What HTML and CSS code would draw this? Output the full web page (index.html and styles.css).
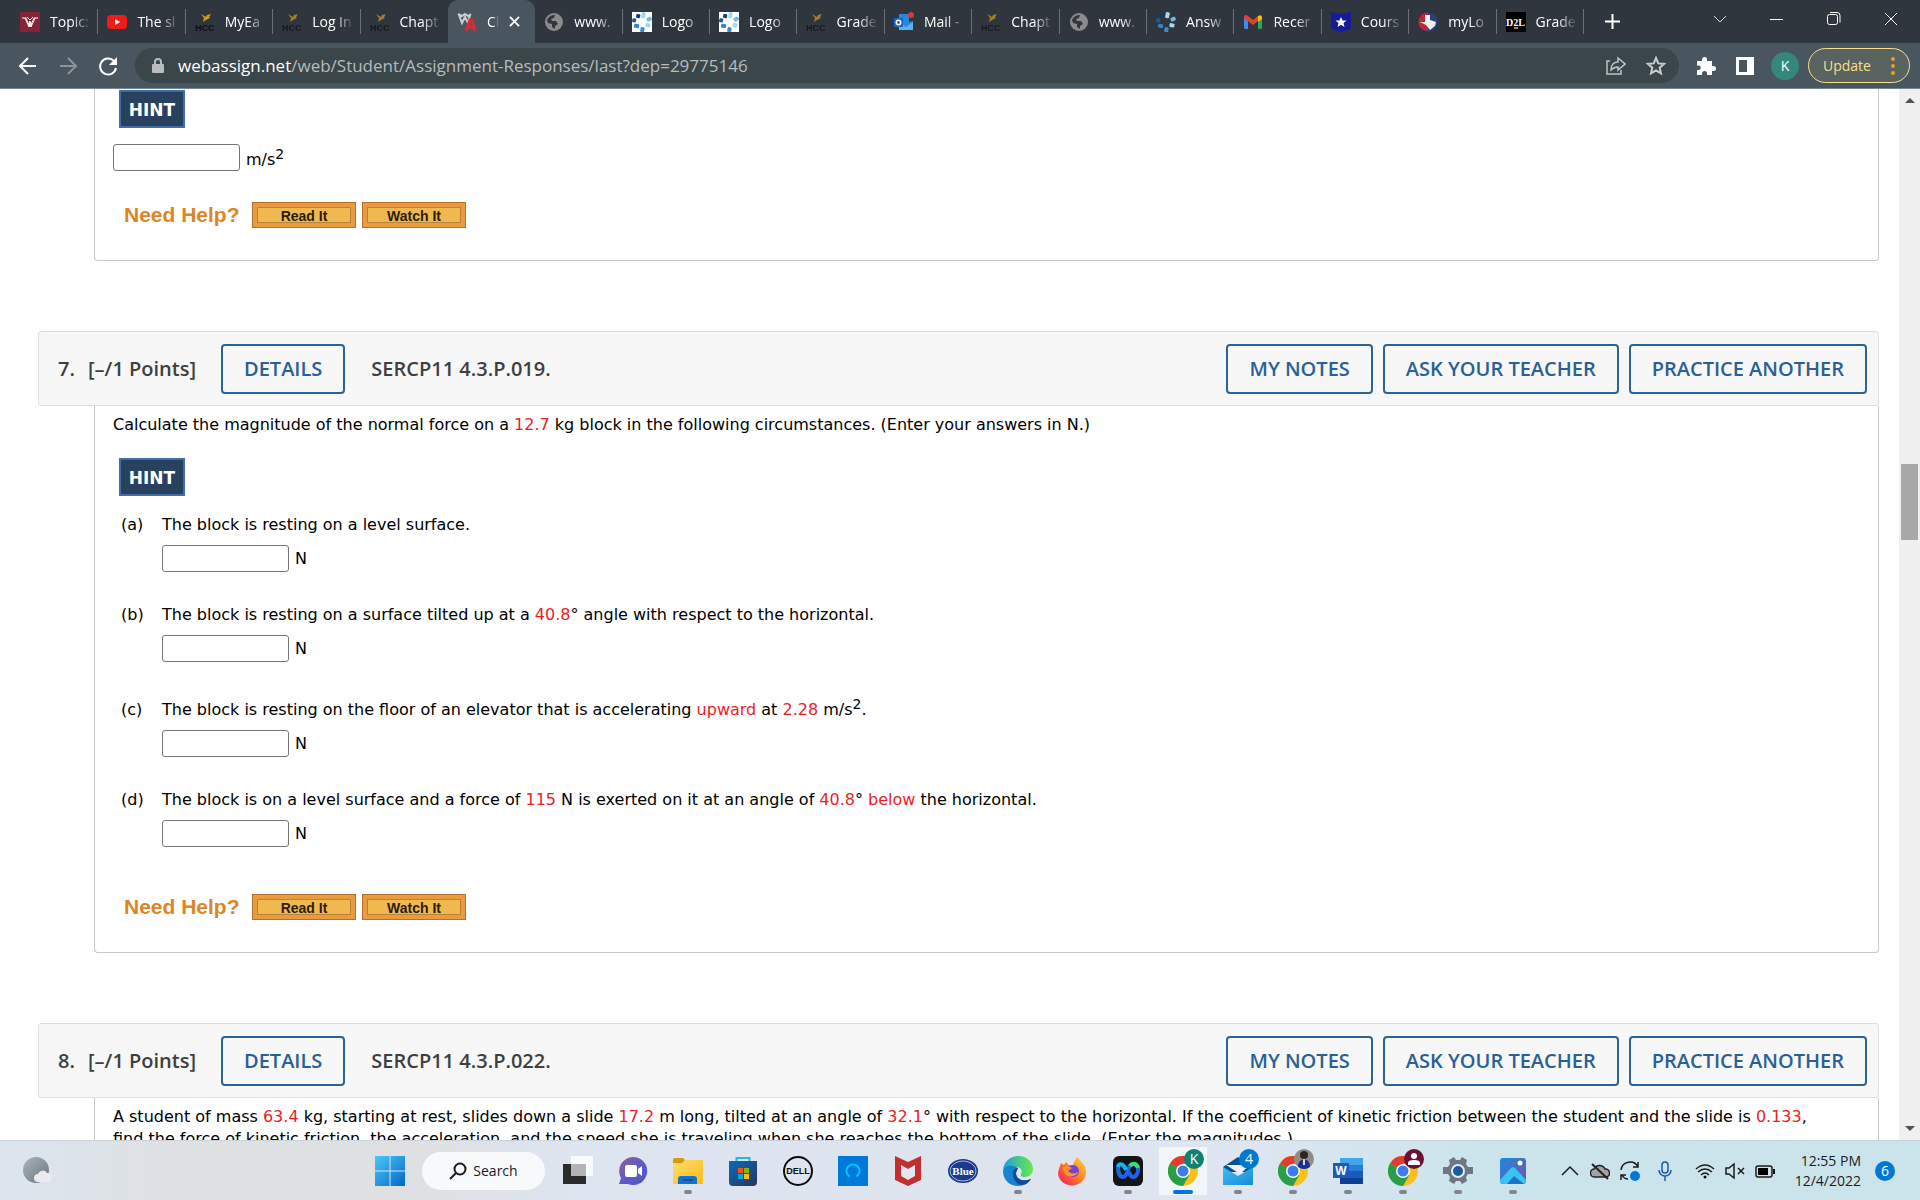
FILE: index.html
```html
<!DOCTYPE html>
<html lang="en">
<head>
  <meta charset="UTF-8">
  <title>Chapter 4 Homework</title>
  <link rel="stylesheet" href="styles.css">
</head>
<body>

  <!-- shared icons -->
  <svg class="defs" width="0" height="0" aria-hidden="true">
    <defs>
      <linearGradient id="g-win" x1="0" y1="0" x2="1" y2="1"><stop offset="0" stop-color="#4cc9fb"/><stop offset="1" stop-color="#0067c9"/></linearGradient>
      <linearGradient id="g-chat" x1="0" y1="0" x2="1" y2="1"><stop offset="0" stop-color="#8f6296"/><stop offset=".5" stop-color="#5f5bc8"/><stop offset="1" stop-color="#4a53c4"/></linearGradient>
      <linearGradient id="g-folder" x1="0" y1="0" x2="1" y2="1"><stop offset="0" stop-color="#ffdf70"/><stop offset="1" stop-color="#fbb91b"/></linearGradient>
      <linearGradient id="g-store" x1="0" y1="0" x2="1" y2="1"><stop offset="0" stop-color="#0d6ab5"/><stop offset="1" stop-color="#26365f"/></linearGradient>
      <linearGradient id="g-edge" x1="0" y1="0" x2="1" y2="0"><stop offset="0" stop-color="#1a9fdc"/><stop offset="1" stop-color="#6bea4a"/></linearGradient>
      <linearGradient id="g-fox" x1="1" y1="0" x2="0" y2="1"><stop offset="0" stop-color="#ffe23f"/><stop offset=".5" stop-color="#ff7b22"/><stop offset="1" stop-color="#f0106b"/></linearGradient>
      <linearGradient id="g-mail" x1="0" y1="0" x2="1" y2="1"><stop offset="0" stop-color="#3cc0f0"/><stop offset="1" stop-color="#1a8ad8"/></linearGradient>
      <linearGradient id="g-photo" x1="0" y1="0" x2="1" y2="1"><stop offset="0" stop-color="#1a8be0"/><stop offset="1" stop-color="#7a4fa8"/></linearGradient>
      <linearGradient id="g-moon" x1="0" y1="0" x2="1" y2="1"><stop offset="0" stop-color="#a9b4bd"/><stop offset="1" stop-color="#6d767e"/></linearGradient>

      <symbol id="hcc" viewBox="0 0 20 20">
        <path d="M6 2l5 3 1-2 4-1-2 3 1 1-4 2-3 2 1-4z" fill="#d99a1c"/>
        <text x="0" y="19" font-family="Liberation Sans" font-weight="bold" font-size="9" fill="#0c0e10">HCC</text>
      </symbol>
      <symbol id="globe" viewBox="0 0 20 20">
        <circle cx="10" cy="10" r="9" fill="#8b8b8b"/>
        <path d="M3 8c2-4 5-5 8-5l-1 3-3 1 1 2h4l2 3-3 2v3l-3-2v-3l-4-1z" fill="#30363d"/>
      </symbol>
      <symbol id="dots" viewBox="0 0 20 20">
        <g transform="rotate(12 10 10)">
          <rect x="8" y="0" width="4" height="6" rx="1" fill="#a4d8ee"/>
          <rect x="14" y="3" width="4" height="5" rx="1" fill="#6bbbe2" transform="rotate(50 16 6)"/>
          <rect x="14" y="10" width="5" height="4" rx="1" fill="#a4d8ee"/>
          <rect x="10" y="15" width="4" height="5" rx="1" fill="#3a8ccb"/>
          <rect x="3" y="13" width="5" height="4" rx="1" fill="#2f86cc"/>
          <rect x="0" y="8" width="4" height="4" rx="1" fill="#1e5c9d"/>
          <rect x="3" y="3" width="4" height="4" rx="1" fill="#123a6b"/>
        </g>
      </symbol>
      <symbol id="chrome" viewBox="0 0 30 30">
        <circle cx="15" cy="15" r="15" fill="#fbc116"/>
        <path d="M15 15L2 7.500A15 15 0 0 1 28 7.500H15z" fill="#e33b2e"/>
        <path d="M2 7.500A15 15 0 0 0 15 30L21.500 18.700 15 15z" fill="#2a9d48"/>
        <circle cx="15" cy="15" r="7" fill="#fff"/>
        <circle cx="15" cy="15" r="5.500" fill="#3b7ded"/>
      </symbol>
    </defs>
  </svg>

  <header class="browser">
    <div class="tab-strip">
      <nav class="tabs">
        <a class="tab" href="#"><svg class="favicon" viewBox="0 0 20 20"><path fill="#862339" d="M0 0h20v20H0z"/><path d="M2 6h4l3 7 1-4 1 4 3-7h4M5 6l4 9 1-3 1 3 4-9M7 5l3 3 3-3" stroke="#fff" fill="none"/></svg><span>Topic:</span></a>
        <a class="tab" href="#"><svg class="favicon" viewBox="0 0 20 20"><rect y="3" width="20" height="14" rx="4" fill="#f01c1c"/><path d="M8 7l5 3-5 3z" fill="#fff"/></svg><span>The sl</span></a>
        <a class="tab" href="#"><svg class="favicon"><use href="#hcc"/></svg><span>MyEa</span></a>
        <a class="tab" href="#"><svg class="favicon faded"><use href="#hcc"/></svg><span>Log In</span></a>
        <a class="tab" href="#"><svg class="favicon faded"><use href="#hcc"/></svg><span>Chapt</span></a>
        <a class="tab active" href="#"><svg class="favicon" viewBox="0 0 20 20"><path d="M2 3l3 8 3-6 3 6 2-8M1 2l4 2 3-2 3 2 3-2" stroke="#c9cdd0" stroke-width="2" fill="none"/><path d="M9 19l4-11h2l3 11M10 15h6" stroke="#e0282e" stroke-width="3" fill="none"/></svg><span>Cl</span>
          <svg class="close" viewBox="0 0 12 12"><path d="M1 1l10 10M11 1L1 11" stroke="#fff" stroke-width="2"/></svg></a>
        <a class="tab" href="#"><svg class="favicon"><use href="#globe"/></svg><span>www.</span></a>
        <a class="tab" href="#"><svg class="favicon white"><use href="#dots"/></svg><span>Logo</span></a>
        <a class="tab" href="#"><svg class="favicon white"><use href="#dots"/></svg><span>Logo</span></a>
        <a class="tab" href="#"><svg class="favicon faded"><use href="#hcc"/></svg><span>Grade</span></a>
        <a class="tab" href="#"><svg class="favicon" viewBox="0 0 20 20"><path d="M5 2h10v8l4-1v9H5z" fill="#2a86d8"/><path d="M5 10l7 5 7-5v8H5z" fill="#5ab2f2"/><rect y="6" width="9" height="9" fill="#1466c0"/><circle cx="4.500" cy="10.500" r="2.200" fill="none" stroke="#fff" stroke-width="1.500"/><circle cx="17" cy="3" r="3" fill="#d43a3a"/></svg><span>Mail -</span></a>
        <a class="tab" href="#"><svg class="favicon faded"><use href="#hcc"/></svg><span>Chapt</span></a>
        <a class="tab" href="#"><svg class="favicon"><use href="#globe"/></svg><span>www.</span></a>
        <a class="tab" href="#"><svg class="favicon"><use href="#dots"/></svg><span>Answ</span></a>
        <a class="tab" href="#"><svg class="favicon" viewBox="0 0 20 20"><path d="M1 5h4v12H2l-1-1z" fill="#4a86ee"/><path d="M15 5h4v11l-1 1h-3z" fill="#2fa653"/><path d="M1 4q2-2 4 0l5 4 5-4v5l-5 4-5-4-4-3z" fill="#e3402f"/><path d="M15 4q3-2 4 1v2l-4 3z" fill="#f9bc13"/></svg><span>Recer</span></a>
        <a class="tab" href="#"><svg class="favicon" viewBox="0 0 20 20"><path d="M0 0l10 2L20 0v17l-10 3-10-3z" fill="#161b97"/><path d="M10 5l1.500 3.500h4l-3 2.500 1 4-3.500-2.200L6.500 15l1-4-3-2.500h4z" fill="#fff"/></svg><span>Cours</span></a>
        <a class="tab" href="#"><svg class="favicon" viewBox="0 0 20 20"><circle cx="10" cy="10" r="9.500" fill="#25427c"/><path d="M10 .5a9.500 9.500 0 0 0-5 17.500l5 1z" fill="#c32737"/><path d="M7 3h5v5l6 2-1 4-5 4-4-5-6-3h5z" fill="#f1f1f4"/></svg><span>myLo</span></a>
        <a class="tab" href="#"><svg class="favicon" viewBox="0 0 20 20"><path d="M0 0h20v20H0z"/><path d="M8 16h4" stroke="#e07020" stroke-width="2"/><text x="0" y="14" font-family="Liberation Serif" font-weight="bold" font-size="10" fill="#fff">D2L</text></svg><span>Grade</span></a>
      </nav>
      <div class="window-controls">
        <button class="new-tab" aria-label="New tab"><svg width="15" height="15" viewBox="0 0 15 15"><path d="M7.500 0v15M0 7.500h15" stroke="#fff" stroke-width="2"/></svg></button>
        <button aria-label="Search tabs"><svg width="14" height="8" viewBox="0 0 14 8"><path d="M1 1l6 6 6-6" stroke="#d5d8da" fill="none"/></svg></button>
        <button aria-label="Minimize"><svg width="14" height="14" viewBox="0 0 14 14"><path d="M0 7.500h13" stroke="#fff"/></svg></button>
        <button aria-label="Restore"><svg width="14" height="14" viewBox="0 0 14 14"><rect x=".5" y="2.500" width="10" height="10" rx="2" stroke="#fff" fill="none"/><path d="M3 .5h7q3 0 3 3v7" stroke="#fff" fill="none"/></svg></button>
        <button aria-label="Close"><svg width="14" height="14" viewBox="0 0 14 14"><path d="M1 1l12 12M13 1L1 13" stroke="#fff"/></svg></button>
      </div>
    </div>

    <div class="toolbar">
      <button aria-label="Back"><svg width="20" height="20" viewBox="0 0 20 20"><path d="M18 10H3M10 2l-8 8 8 8" stroke="#fff" stroke-width="2" fill="none"/></svg></button>
      <button aria-label="Forward"><svg width="20" height="20" viewBox="0 0 20 20"><path d="M2 10h15M10 2l8 8-8 8" stroke="#8b9499" stroke-width="2" fill="none"/></svg></button>
      <button aria-label="Reload"><svg width="20" height="20" viewBox="0 0 20 20"><path d="M16 5a8 8 0 1 0 2 7" stroke="#fff" stroke-width="2" fill="none"/><path d="M19 1v8h-8z" fill="#fff"/></svg></button>
      <div class="address">
        <svg width="12" height="16" viewBox="0 0 12 16"><path d="M3 7V4a3 3 0 0 1 6 0v3" stroke="#b8bcbf" stroke-width="2" fill="none"/><rect y="6" width="12" height="9" rx="1" fill="#b8bcbf"/></svg>
        <div class="url"><b>webassign.net</b>/web/Student/Assignment-Responses/last?dep=29775146</div>
        <button aria-label="Share"><svg width="20" height="20" viewBox="0 0 20 20"><path d="M4 5H1v13h14v-4" stroke="#bfc4c7" stroke-width="1.500" fill="none"/><path d="M12 2l7 6-7 6v-3c-3 0-5 1-7 3 0-5 3-8 7-8z" stroke="#bfc4c7" stroke-width="1.500" fill="none"/></svg></button>
        <button aria-label="Bookmark"><svg width="20" height="20" viewBox="0 0 20 20"><path d="M10 2l2.300 5.400 5.700.5-4.300 3.800 1.300 5.700-5-3-5 3 1.300-5.700L2 7.900l5.700-.5z" stroke="#c8ccce" stroke-width="2" fill="none"/></svg></button>
      </div>
      <div class="extensions">
        <button aria-label="Extensions"><svg width="20" height="20" viewBox="0 0 20 20"><path d="M1 5h5V3.500a2.500 2.500 0 0 1 5 0V5h5v5h1.500a2.500 2.500 0 0 1 0 5H16v4h-5v-1.500a2.500 2.500 0 0 0-5 0V19H1v-5h1.500a2 2 0 0 0 0-4.500H1z" fill="#fff"/></svg></button>
        <button aria-label="Side panel"><svg width="18" height="18" viewBox="0 0 18 18"><path d="M1.500 1.500h15v15h-15z" stroke="#fff" stroke-width="3" fill="none"/><path d="M11 1h6v16h-6z" fill="#fff"/></svg></button>
        <button class="avatar">K</button>
        <button class="update">Update <svg width="4" height="18" viewBox="0 0 4 18" fill="#f29a26"><circle cx="2" cy="2" r="2"/><circle cx="2" cy="9" r="2"/><circle cx="2" cy="16" r="2"/></svg></button>
      </div>
    </div>
  </header>

  <div class="viewport">
    <main>
      <section class="question">
        <div class="question-body continued">
          <button class="hint">HINT</button>
          <div class="answer"><input type="text" id="q6"><label for="q6">m/s<sup>2</sup></label></div>
          <div class="need-help"><span>Need Help?</span><button>Read It</button><button>Watch It</button></div>
        </div>
      </section>

      <section class="question">
        <div class="question-header">
          <h2><span class="number">7.</span>[&#8211;/1 Points]</h2>
          <button class="btn">DETAILS</button>
          <h2 class="source">SERCP11 4.3.P.019.</h2>
          <div class="actions">
            <button class="btn">MY NOTES</button>
            <button class="btn">ASK YOUR TEACHER</button>
            <button class="btn">PRACTICE ANOTHER</button>
          </div>
        </div>
        <div class="question-body">
          <p>Calculate the magnitude of the normal force on a <em>12.7</em> kg block in the following circumstances. (Enter your answers in N.)</p>
          <button class="hint">HINT</button>
          <div class="parts">
            <div class="part">
              <span>(a)</span>
              <label for="q7a">The block is resting on a level surface.</label>
              <div class="answer"><input type="text" id="q7a">N</div>
            </div>
            <div class="part">
              <span>(b)</span>
              <label for="q7b">The block is resting on a surface tilted up at a <em>40.8</em>&deg; angle with respect to the horizontal.</label>
              <div class="answer"><input type="text" id="q7b">N</div>
            </div>
            <div class="part">
              <span>(c)</span>
              <label for="q7c">The block is resting on the floor of an elevator that is accelerating <em>upward</em> at <em>2.28</em> m/s<sup>2</sup>.</label>
              <div class="answer"><input type="text" id="q7c">N</div>
            </div>
            <div class="part">
              <span>(d)</span>
              <label for="q7d">The block is on a level surface and a force of <em>115</em> N is exerted on it at an angle of <em>40.8</em>&deg; <em>below</em> the horizontal.</label>
              <div class="answer"><input type="text" id="q7d">N</div>
            </div>
          </div>
          <div class="need-help"><span>Need Help?</span><button>Read It</button><button>Watch It</button></div>
        </div>
      </section>

      <section class="question">
        <div class="question-header">
          <h2><span class="number">8.</span>[&#8211;/1 Points]</h2>
          <button class="btn">DETAILS</button>
          <h2 class="source">SERCP11 4.3.P.022.</h2>
          <div class="actions">
            <button class="btn">MY NOTES</button>
            <button class="btn">ASK YOUR TEACHER</button>
            <button class="btn">PRACTICE ANOTHER</button>
          </div>
        </div>
        <div class="question-body">
          <p>A student of mass <em>63.4</em> kg, starting at rest, slides down a slide <em>17.2</em> m long, tilted at an angle of <em>32.1</em>&deg; with respect to the horizontal. If the coefficient of kinetic friction between the student and the slide is <em>0.133</em>,<br>
          find the force of kinetic friction, the acceleration, and the speed she is traveling when she reaches the bottom of the slide. (Enter the magnitudes.)</p>
        </div>
      </section>
    </main>

    <div class="scrollbar">
      <svg width="10" height="5" viewBox="0 0 10 5"><path d="M0 5l5-5 5 5z" fill="#505050"/></svg>
      <div class="track"><div class="thumb"></div></div>
      <svg width="10" height="5" viewBox="0 0 10 5"><path d="M0 0l5 5 5-5z" fill="#505050"/></svg>
    </div>
  </div>

  <footer class="taskbar">
    <div class="weather">
      <svg width="30" height="30" viewBox="0 0 30 30"><circle cx="14" cy="14" r="13" fill="url(#g-moon)"/><path d="M16 26a4 4 0 0 1 0-8 5 5 0 0 1 9-1 4.500 4.500 0 0 1 1 9z" fill="#e9ebee"/></svg>
    </div>

    <div class="apps">
      <div class="app"><svg viewBox="0 0 30 30" fill="url(#g-win)"><path d="M0 0h14.500v14.500H0zM15.500 0H30v14.500H15.500zM0 15.500h14.500V30H0zM15.500 15.500H30V30H15.500z"/></svg></div>
      <button class="search"><svg width="18" height="18" viewBox="0 0 18 18"><circle cx="11" cy="7" r="5.500" stroke="#1c1c1c" stroke-width="2" fill="none"/><path d="M7 11l-6 6" stroke="#1c1c1c" stroke-width="2"/></svg>Search</button>
      <div class="app"><svg viewBox="0 0 30 30"><path d="M0 8h23v20H0z" fill="#2b2b2b"/><path d="M8 0h22v20H8z" fill="#fff" opacity=".8"/><path d="M8 8h15v12H8z" fill="#b4b4b4"/></svg></div>
      <div class="app"><svg viewBox="0 0 30 30"><path d="M15 1a14 14 0 1 1-5 27H1l2-6A14 14 0 0 1 15 1z" fill="url(#g-chat)"/><rect x="7" y="9" width="12" height="12" rx="2" fill="#fff"/><path d="M20 13l4-3v10l-4-3z" fill="#fff"/></svg></div>
      <div class="app running"><svg viewBox="0 0 30 30"><path d="M0 4q0-2 2-2h8l3 3v4H0z" fill="#d99a12"/><path d="M0 7h9l3-3h18v24H0z" fill="url(#g-folder)"/><path d="M5 28v-5q0-3 3-3h13q3 0 3 3v5z" fill="#1273c8"/><path d="M10 24h10" stroke="#0b4a8d" stroke-width="1.500"/></svg></div>
      <div class="app"><svg viewBox="0 0 30 30"><path d="M8.500 6V2h13v4" stroke="#25b4ec" stroke-width="2" fill="none"/><path d="M1 5h28v21q0 4-4 4H5q-4 0-4-4z" fill="url(#g-store)"/><path d="M10 12h5v5h-5z" fill="#f25022"/><path d="M16 12h5v5h-5z" fill="#7fba00"/><path d="M10 18h5v5h-5z" fill="#00a4ef"/><path d="M16 18h5v5h-5z" fill="#ffb900"/></svg></div>
      <div class="app"><svg viewBox="0 0 30 30"><circle cx="15" cy="15" r="14" fill="none" stroke="#0c0c0c" stroke-width="2"/><text x="15" y="18" text-anchor="middle" font-family="Liberation Sans" font-weight="bold" font-size="9" fill="#0c0c0c">DELL</text></svg></div>
      <div class="app"><svg viewBox="0 0 30 30"><path d="M0 0h30v30H0z" fill="#0078d7"/><path d="M11.500 20.500a6.500 6.500 0 1 1 7 0" stroke="#00c8ff" stroke-width="2" fill="none"/></svg></div>
      <div class="app"><svg viewBox="0 0 30 30"><path d="M2 0l13 6 13-6v24l-13 6-13-6z" fill="#c22f2e"/><path d="M8 9l7 4 7-4v11l-7 4-7-4z" fill="#e2e7f0"/></svg></div>
      <div class="app"><svg viewBox="0 0 30 30"><ellipse cx="15" cy="15" rx="15" ry="12" fill="#1c3a8c"/><ellipse cx="15" cy="15" rx="13" ry="10" fill="none" stroke="#a9b6d8"/><text x="15" y="19" text-anchor="middle" font-family="Liberation Serif" font-weight="bold" font-size="11" fill="#fff">Blue</text></svg></div>
      <div class="app running"><svg viewBox="0 0 30 30"><path d="M0 14C1 5 8 0 15 0c9 0 15 6 15 13 0 5-4 8-8 8-3 0-5-1-4-3 2-3 0-7-5-7C7 10 1 13 0 14z" fill="url(#g-edge)"/><path d="M0 15c0 9 7 15 15 15 6 0 10-3 13-7-7 3-15 1-15-6 0-2 1-4 2-5-6-4-14-2-15 3z" fill="#1683ce"/><path d="M10 16c-1 7 4 13 9 13 4 0 7-3 9-6-7 3-15 1-15-6l2-5c-3 0-5 2-5 4z" fill="#0f4d9c"/></svg></div>
      <div class="app"><svg viewBox="0 0 30 30"><path d="M3 7l3 2 2-3 3 3h4c1-4 3-7 5-8 1 4 8 6 8 15a14 13 0 0 1-28 1C1 12 2 10 3 7z" fill="url(#g-fox)"/><circle cx="15" cy="15" r="6" fill="#7842d5"/><path d="M5 11c5-2 7 0 9 1l-4 3c3 3 7 3 10 1-1 4-8 6-12 3-2-2-3-5-3-8z" fill="#ff9328"/></svg></div>
      <div class="app running"><svg viewBox="0 0 30 30"><rect width="30" height="30" rx="6" fill="#151515"/><path d="M5 10c0 7 2 11 5 11s4-4 5-7 2-6 5-6 6 2 5 7-3 6-5 6-3-2-4-5" stroke="#1e62f4" stroke-width="4" fill="none"/><path d="M5 11c1-5 6-3 8 3" stroke="#14b8e8" stroke-width="4" fill="none"/><path d="M17 10c3-4 7-2 8 2" stroke="#3ddc6c" stroke-width="4" fill="none"/></svg></div>
      <div class="app running current"><svg><use href="#chrome"/></svg><span class="badge teal">K</span></div>
      <div class="app running"><svg viewBox="0 0 30 30"><path d="M0 11L15 1l15 10v5H0z" fill="#0c4f91"/><path d="M3 9h24l-10 9z" fill="#f1f1f5"/><path d="M0 11l15 9 15-9v18H0z" fill="url(#g-mail)"/></svg><span class="badge blue">4</span></div>
      <div class="app running"><svg><use href="#chrome"/></svg><span class="badge"><svg viewBox="0 0 20 20"><circle cx="10" cy="10" r="10" fill="#8f8d84"/><path d="M4 18q0-7 6-8 6 1 6 8-6 4-12 0z" fill="#1c2f94"/><circle cx="10" cy="6" r="4" fill="#2b2523"/><path d="M9 10h2v6H9z" fill="#d5d9e8"/></svg></span></div>
      <div class="app running"><svg viewBox="0 0 30 30"><path d="M7 2h23v7H7z" fill="#41a5ee"/><path d="M7 9h23v6H7z" fill="#2b7cd3"/><path d="M7 15h23v7H7z" fill="#185abd"/><path d="M7 22h23v6H7z" fill="#103f91"/><path d="M0 7h16v15H0z" fill="#185abd"/><text x="8" y="19" text-anchor="middle" font-family="Liberation Sans" font-weight="bold" font-size="12" fill="#fff">W</text></svg></div>
      <div class="app running"><svg><use href="#chrome"/></svg><span class="badge wine"><svg viewBox="0 0 20 20" fill="#fff"><circle cx="10" cy="7" r="3"/><path d="M4 16v-2q0-3 6-3t6 3v2z"/></svg></span></div>
      <div class="app running"><svg viewBox="0 0 30 30"><path d="M11 1l2 3h4l2-3 5 3-1 4 2 3h5v7h-5l-2 3 1 4-5 3-2-3h-4l-2 3-5-3 1-4-2-3H0v-7h5l2-3-1-4z" fill="#6f7780"/><circle cx="15" cy="15" r="7" fill="#e4edf1"/><circle cx="15" cy="15" r="5" fill="#1c5c9c"/></svg></div>
      <div class="app running"><svg viewBox="0 0 30 30"><rect x="2" y="2" width="26" height="26" rx="3" fill="url(#g-photo)"/><path d="M2 24l11-12q2-2 4 0l11 12v1q0 3-3 3H5q-3 0-3-3z" fill="#39c3f2"/><path d="M9 28l7-8 10 8z" fill="#1a73c8"/><circle cx="22" cy="7" r="2.500" fill="#fff"/></svg></div>
    </div>

    <div class="tray">
      <svg viewBox="0 0 20 20"><path d="M2 14l8-8 8 8" stroke="#1b1b1b" stroke-width="1.500" fill="none"/></svg>
      <svg viewBox="0 0 20 20"><path d="M5 16a4 4 0 0 1-1-8 6 6 0 0 1 11 0 4 4 0 0 1 1 8z" fill="#a3a3a3" stroke="#222" stroke-width="1.500"/><path d="M2 3l16 15" stroke="#222" stroke-width="2"/></svg>
      <svg viewBox="0 0 20 20"><path d="M1 9a9 9 0 0 1 17-3M18 1v5h-5M1 19v-5h5M2 14q2 4 6 4" stroke="#1b1b1b" stroke-width="1.500" fill="none"/><circle cx="15" cy="15" r="5" fill="#0078d4"/></svg>
      <svg class="mic" viewBox="0 0 20 20"><rect x="7" y="1" width="6" height="11" rx="3" stroke="#1d57a5" stroke-width="1.500" fill="none"/><path d="M4 9a6 6 0 0 0 12 0M10 15v5" stroke="#1d57a5" stroke-width="1.500" fill="none"/></svg>
      <svg viewBox="0 0 20 20"><path d="M1 8q9-8 18 0M3 11q7-6 14 0M6 14q4-4 8 0" stroke="#1b1b1b" stroke-width="1.500" fill="none"/><circle cx="10" cy="16" r="1.500"/></svg>
      <svg viewBox="0 0 20 20"><path d="M1 7h3l5-4v14l-5-4H1zM13 7l6 6M19 7l-6 6" stroke="#1b1b1b" stroke-width="1.500" fill="none"/></svg>
      <svg viewBox="0 0 20 20"><rect x="1" y="5" width="16" height="11" rx="2" stroke="#1b1b1b" stroke-width="1.500" fill="none"/><path d="M3 7h10v7H3zM18 8h2v5h-2z"/></svg>
      <time datetime="2022-12-04T12:55">12:55 PM<br>12/4/2022</time>
      <span class="count">6</span>
    </div>
  </footer>

</body>
</html>
```
FILE: styles.css
```css
* {
  box-sizing: border-box;
}

body {
  height: 100vh;
  margin: 0;
  display: flex;
  flex-direction: column;
  overflow: hidden;
  background: #fff;
  color: #000;
  font: 16px/22px "DejaVu Sans", Verdana, sans-serif;
}

button {
  padding: 0;
  border: none;
  background: none;
  color: inherit;
  font: inherit;
  cursor: pointer;
}

svg {
  display: block;
  flex: none;
}

.defs {
  position: absolute;
}

/* browser */

.browser {
  border-bottom: 1px solid #76868e;
  background: #49565f;
  color: #fff;
  font-family: "Open Sans", sans-serif;
}

.tab-strip {
  display: flex;
  height: 43px;
  padding-left: 11px;
  background: #30363d;
}

.tabs {
  display: grid;
  grid-template-columns: repeat(18, minmax(0, 1fr));
  flex: 1;
  min-width: 0;
}

.tab {
  display: flex;
  align-items: center;
  gap: 10px;
  padding: 0 4px 0 9px;
  background: linear-gradient(#6b7277, #6b7277) no-repeat right center / 1px 25px;
  color: #fff;
  font-size: 14px;
  text-decoration: none;
}

.tab span {
  flex: 1;
  white-space: nowrap;
  mask-image: linear-gradient(to right, #000 50%, #0003 85%);
}

.tab.active {
  padding-right: 15px;
  border-radius: 10px 10px 0 0;
  background: #49565f;
}

.tab:has(+ .active) {
  background: none;
}

.favicon {
  width: 20px;
  height: 20px;
}

.favicon.faded {
  opacity: 0.7;
}

.favicon.white {
  background: #fff;
}

.close {
  width: 11px;
  height: 11px;
}

.window-controls {
  display: flex;
  width: 336px;
  flex: none;
  align-items: flex-start;
}

.window-controls button {
  display: grid;
  width: 57px;
  height: 37px;
  place-items: center;
}

.window-controls .new-tab {
  height: 43px;
  margin-right: 50px;
}

.toolbar {
  display: flex;
  height: 45px;
  align-items: center;
  gap: 20px;
  padding: 0 10px 0 18px;
}

.address {
  display: flex;
  flex: 1;
  height: 35px;
  align-items: center;
  gap: 20px;
  padding: 0 13px 0 17px;
  margin: 0 -3px;
  border-radius: 18px;
  background: #3b464b;
}

.url {
  flex: 1;
  margin-left: -6px;
  color: #b6bbbe;
  font-size: 17px;
}

.url b {
  color: #fff;
  font-weight: normal;
}

.extensions {
  display: flex;
  align-items: center;
  gap: 20px;
}

.avatar {
  width: 28px;
  height: 28px;
  margin: 0 -11px 0 -3px;
  border-radius: 50%;
  background: #35877a;
  font-size: 14px;
}

.update {
  display: flex;
  width: 102px;
  height: 35px;
  align-items: center;
  justify-content: space-between;
  padding: 0 14px;
  border: 1px solid #fade8f;
  border-radius: 18px;
  background: #59635f;
  color: #fade8f;
  font-size: 14px;
}

/* assignment */

.viewport {
  display: flex;
  flex: 1;
  min-height: 0;
}

main {
  flex: 1;
  overflow: hidden;
  padding: 0 20px 0 38px;
}

.question {
  margin-bottom: 70px;
}

.question-header {
  display: flex;
  height: 75px;
  align-items: center;
  padding: 0 11px 0 19px;
  border: 1px solid #dedede;
  border-radius: 3px;
  background: #f7f7f7;
  font-family: "Open Sans", sans-serif;
}

.question-header h2 {
  margin: 0;
  color: #3f3f3f;
  font-size: 20px;
  font-weight: 650;
}

.question-header .number {
  display: inline-block;
  width: 30px;
}

.question-header .source {
  margin-left: 26px;
}

h2 + .btn {
  margin-left: 25px;
}

.btn {
  height: 50px;
  padding: 0 21px;
  border: 2px solid #2a6496;
  border-radius: 4px;
  color: #2a6096;
  font-size: 20px;
  font-weight: 600;
}

.actions {
  display: flex;
  gap: 10px;
  margin-left: auto;
}

.question-body {
  padding: 8px 18px 32px;
  margin-left: 56px;
  border: 1px solid #c8c8c8;
  border-top: none;
  border-radius: 0 0 4px 4px;
}

.question-body.continued {
  padding-top: 1px;
}

.question-body p {
  margin: 0 0 22px;
}

em {
  color: #ee1c25;
  font-style: normal;
}

sup {
  font-size: 14px;
  line-height: 21px;
}

.hint {
  display: block;
  width: 66px;
  height: 38px;
  padding-top: 1px;
  margin: 0 0 16px 6px;
  border: 2px solid #426da9;
  background: #27415f;
  color: #fff;
  font-size: 17px;
  font-weight: bold;
}

.parts {
  padding-top: 2px;
}

.answer {
  display: flex;
  height: 27px;
  align-items: center;
  gap: 6px;
}

.answer input {
  width: 127px;
  height: 27px;
  padding: 1px 2px;
  border: 1px solid #767676;
  border-radius: 3px;
  font: inherit;
}

.part {
  display: grid;
  grid-template-columns: 41px 1fr;
  row-gap: 9px;
  align-items: baseline;
  margin: 0 0 32px 8px;
}

.part .answer {
  grid-column: 2;
}

.need-help {
  display: flex;
  align-items: center;
  gap: 6px;
  margin: 31px 0 0 11px;
  font-family: "Liberation Sans", Arial, sans-serif;
}

.parts + .need-help {
  margin-top: 47px;
}

.need-help span {
  width: 122px;
  color: #dd8524;
  font-size: 21px;
  font-weight: bold;
}

.need-help button {
  width: 104px;
  height: 26px;
  padding-top: 1px;
  border: 1px solid #b0722c;
  background: #f0b94f;
  box-shadow: inset 0 0 0 4px #ec9a40, inset 0 0 0 5px #b98236;
  color: #2a1d08;
  font-size: 14px;
  font-weight: bold;
}

.scrollbar {
  display: flex;
  width: 21px;
  flex-direction: column;
  align-items: center;
  gap: 12px;
  padding: 9px 0;
  background: #f0f0f0;
}

.track {
  display: flex;
  width: 17px;
  flex: 1;
  flex-direction: column;
}

.track::before {
  content: "";
  flex: 350;
}

.thumb {
  flex: 77;
  background: #a8a8a8;
}

.track::after {
  content: "";
  flex: 576;
}

/* taskbar */

.taskbar {
  display: grid;
  height: 60px;
  grid-template-columns: 1fr auto 380px;
  align-items: center;
  border-top: 1px solid #ccd2dc;
  background: linear-gradient(to right, #dce5ef, #dfe0e2 10%, #dfe0e2 22%, #dde5f0 30%, #dee4ee 55%, #dfe6f2 64%, #cbe4ec 77%, #cbe4ec);
  color: #1b1b1b;
  font: 14px/20px "Open Sans", sans-serif;
}

.weather {
  padding-left: 22px;
}

.apps {
  display: flex;
  align-items: center;
}

.app {
  position: relative;
  display: grid;
  width: 55px;
  height: 59px;
  place-items: center;
}

.app > svg {
  width: 30px;
  height: 30px;
}

.running::after {
  content: "";
  position: absolute;
  bottom: 6px;
  left: 24px;
  width: 8px;
  height: 4px;
  border-radius: 2px;
  background: #7f868c;
}

.current {
  background: linear-gradient(#f2f6fa, #f2f6fa) no-repeat center / 48px 48px;
}

.current::after {
  left: 18px;
  width: 20px;
  background: #0078d4;
}

.badge {
  position: absolute;
  top: 8px;
  right: 6px;
  width: 20px;
  height: 20px;
  border-radius: 50%;
  color: #fff;
  text-align: center;
}

.teal {
  background: #0f8272;
}

.blue {
  background: #0078d4;
}

.wine {
  background: #6b1132;
}

.search {
  display: flex;
  width: 123px;
  height: 38px;
  align-items: center;
  justify-content: center;
  gap: 6px;
  margin: 0 5px;
  border-radius: 19px;
  background: #f7f9fb;
}

.tray {
  display: flex;
  align-items: center;
  gap: 10px;
  padding: 0 25px 0 20px;
}

.tray svg {
  width: 20px;
  height: 20px;
}

.tray .mic {
  margin: 0 10px 0 5px;
}

.tray time {
  margin-left: auto;
  text-align: right;
}

.count {
  width: 20px;
  height: 20px;
  margin-left: 4px;
  border-radius: 50%;
  background: #0078d4;
  color: #fff;
  text-align: center;
}
```
